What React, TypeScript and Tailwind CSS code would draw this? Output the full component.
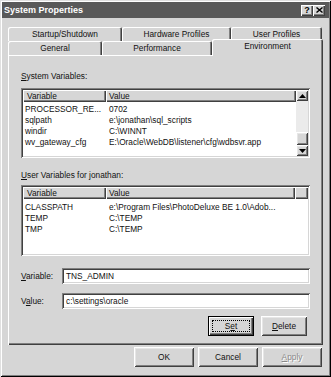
const sunken =
  "shadow-[inset_1px_1px_0_#808080,inset_-1px_-1px_0_#ffffff,inset_2px_2px_0_#404040,inset_-2px_-2px_0_#d6d6d6]";
const raised =
  "shadow-[inset_1px_1px_0_#ffffff,inset_-1px_-1px_0_#404040,inset_2px_2px_0_#e6e6e6,inset_-2px_-2px_0_#808080]";
const hdr =
  "shadow-[inset_1px_1px_0_#ffffff,inset_-1px_-1px_0_#404040,inset_-2px_-2px_0_#808080]";
const tab =
  "shadow-[inset_1px_1px_0_#ffffff,inset_-1px_0_0_#404040,inset_-2px_0_0_#808080] rounded-t-[2px]";

function Row({ a, b }: { a: string; b: string }) {
  return (
    <div className="flex h-[11px] items-center whitespace-nowrap">
      <div className="w-[83px] pl-[2px] overflow-hidden">{a}</div>
      <div className="flex-1 pl-[3px] overflow-hidden">{b}</div>
    </div>
  );
}

function Header({ filler }: { filler?: boolean }) {
  return (
    <div className="flex h-[12px] bg-[#d6d6d6]">
      <div className={`w-[83px] pl-[4px] pb-[1px] flex items-center ${hdr}`}>Variable</div>
      <div className={`flex-1 pl-[3px] pb-[1px] flex items-center ${hdr}`}>Value</div>
      {filler && <div className={`w-[13px] ${hdr}`} />}
    </div>
  );
}

function Arrow({ up }: { up?: boolean }) {
  return (
    <div className={`h-[11px] bg-[#d6d6d6] flex items-center justify-center ${raised}`}>
      <svg width="7" height="4" viewBox="0 0 7 4">
        {up ? <polygon points="3.5,0 7,4 0,4" fill="#000" /> : <polygon points="0,0 7,0 3.5,4" fill="#000" />}
      </svg>
    </div>
  );
}

function Btn({ children, w, disabled }: { children: React.ReactNode; w: string; disabled?: boolean }) {
  return (
    <div
      className={`${w} h-[20px] bg-[#d6d6d6] flex items-center justify-center ${raised} ${
        disabled ? "text-[#8a8a8a] [text-shadow:1px_1px_0_#ffffff]" : ""
      }`}
    >
      {children}
    </div>
  );
}

export default function App() {
  return (
    <div className="w-[331px] h-[377px] bg-[#d6d6d6] p-[2px] flex flex-col font-['Liberation_Sans',Arial,sans-serif] text-[8.3px] leading-[10px] text-[#111111] shadow-[inset_1px_1px_0_#e0e0e0,inset_-1px_-1px_0_#000000,inset_2px_2px_0_#ffffff,inset_-2px_-2px_0_#808080]">
      {/* Title bar */}
      <div className="h-[16px] bg-[#595959] flex items-center pl-[2px] pr-[4px]">
        <span className="text-white font-bold text-[9px] flex-1">System Properties</span>
        <div className={`w-[12px] h-[11px] bg-[#d6d6d6] flex items-center justify-center font-bold text-[9px] leading-[9px] text-black ${hdr}`}>
          ?
        </div>
        <div className={`w-[12px] h-[11px] bg-[#d6d6d6] flex items-center justify-center ${hdr}`}>
          <svg width="7" height="6" viewBox="0 0 7 6">
            <path d="M0.5 0.5 L6.5 5.5 M6.5 0.5 L0.5 5.5" stroke="#000" strokeWidth="1.4" />
          </svg>
        </div>
      </div>

      <div className="flex flex-col px-[6px] pt-[9px]">
        {/* Tabs row 1 */}
        <div className="flex h-[14px]">
          <div className={`w-[114px] flex items-center justify-center ${tab}`}>Startup/Shutdown</div>
          <div className={`w-[109px] flex items-center justify-center ${tab}`}>Hardware Profiles</div>
          <div className={`w-[91px] flex items-center justify-center ${tab}`}>User Profiles</div>
        </div>
        {/* Tabs row 2 */}
        <div className="flex h-[14px] items-end">
          <div className={`w-[94px] h-[14px] flex items-center justify-center ${tab}`}>General</div>
          <div className={`w-[110px] h-[14px] flex items-center justify-center ${tab}`}>Performance</div>
          <div className={`w-[111px] h-[17px] -mb-[1px] relative z-10 bg-[#d6d6d6] flex items-center justify-center pb-[3px] ${tab}`}>
            Environment
          </div>
        </div>

        {/* Panel */}
        <div className="w-[315px] h-[290px] flex flex-col px-[13px] shadow-[inset_1px_1px_0_#ffffff,inset_-1px_-1px_0_#404040,inset_-2px_-2px_0_#808080]">
          <div className="mt-[16px] h-[10px]">
            <span className="underline">S</span>ystem Variables:
          </div>
          <div className={`h-[70px] mt-[7px] bg-white p-[2px] flex ${sunken}`}>
            <div className="flex-1 flex flex-col overflow-hidden">
              <Header />
              <div className="pt-[1px]">
                <Row a="PROCESSOR_RE..." b="0702" />
                <Row a="sqlpath" b="e:\jonathan\sql_scripts" />
                <Row a="windir" b="C:\WINNT" />
                <Row a="wv_gateway_cfg" b="E:\Oracle\WebDB\listener\cfg\wdbsvr.app" />
              </div>
            </div>
            <div className="w-[12px] flex flex-col">
              <Arrow up />
              <div className="flex-1 bg-[#ebebeb] flex flex-col justify-end">
                <div className={`h-[13px] bg-[#d6d6d6] ${raised}`} />
              </div>
              <Arrow />
            </div>
          </div>

          <div className="mt-[12px] h-[10px]">
            <span className="underline">U</span>ser Variables for jonathan:
          </div>
          <div className={`h-[71px] mt-[5px] bg-white p-[2px] flex flex-col ${sunken}`}>
            <Header filler />
            <div className="pt-[2px]">
              <Row a="CLASSPATH" b="e:\Program Files\PhotoDeluxe BE 1.0\Adob..." />
              <Row a="TEMP" b="C:\TEMP" />
              <Row a="TMP" b="C:\TEMP" />
            </div>
          </div>

          <div className="mt-[12px] h-[16px] flex items-center">
            <div className="w-[41px]">
              <span className="underline">V</span>ariable:
            </div>
            <div className={`flex-1 h-[16px] bg-white pl-[4px] flex items-center ${sunken}`}>TNS_ADMIN</div>
          </div>
          <div className="mt-[9px] h-[16px] flex items-center">
            <div className="w-[41px]">
              V<span className="underline">a</span>lue:
            </div>
            <div className={`flex-1 h-[16px] bg-white pl-[4px] flex items-center ${sunken}`}>c:\settings\oracle</div>
          </div>

          <div className="mt-[7px] flex justify-end gap-[7px] pr-[3px]">
            <div className="w-[46px] h-[20px] bg-[#d6d6d6] p-[4px] flex shadow-[inset_0_0_0_1px_#000000,inset_2px_2px_0_#ffffff,inset_-2px_-2px_0_#404040,inset_-3px_-3px_0_#808080]">
              <div className="flex-1 border border-dotted border-black flex items-center justify-center">
                S<span className="underline">e</span>t
              </div>
            </div>
            <Btn w="w-[46px]">
              <span className="underline">D</span>elete
            </Btn>
          </div>
        </div>

        {/* Bottom buttons */}
        <div className="mt-[2px] flex justify-end gap-[4px] pr-[1px]">
          <Btn w="w-[60px]">OK</Btn>
          <Btn w="w-[60px]">Cancel</Btn>
          <Btn w="w-[60px]" disabled>
            <span className="underline">A</span>pply
          </Btn>
        </div>
      </div>
    </div>
  );
}
